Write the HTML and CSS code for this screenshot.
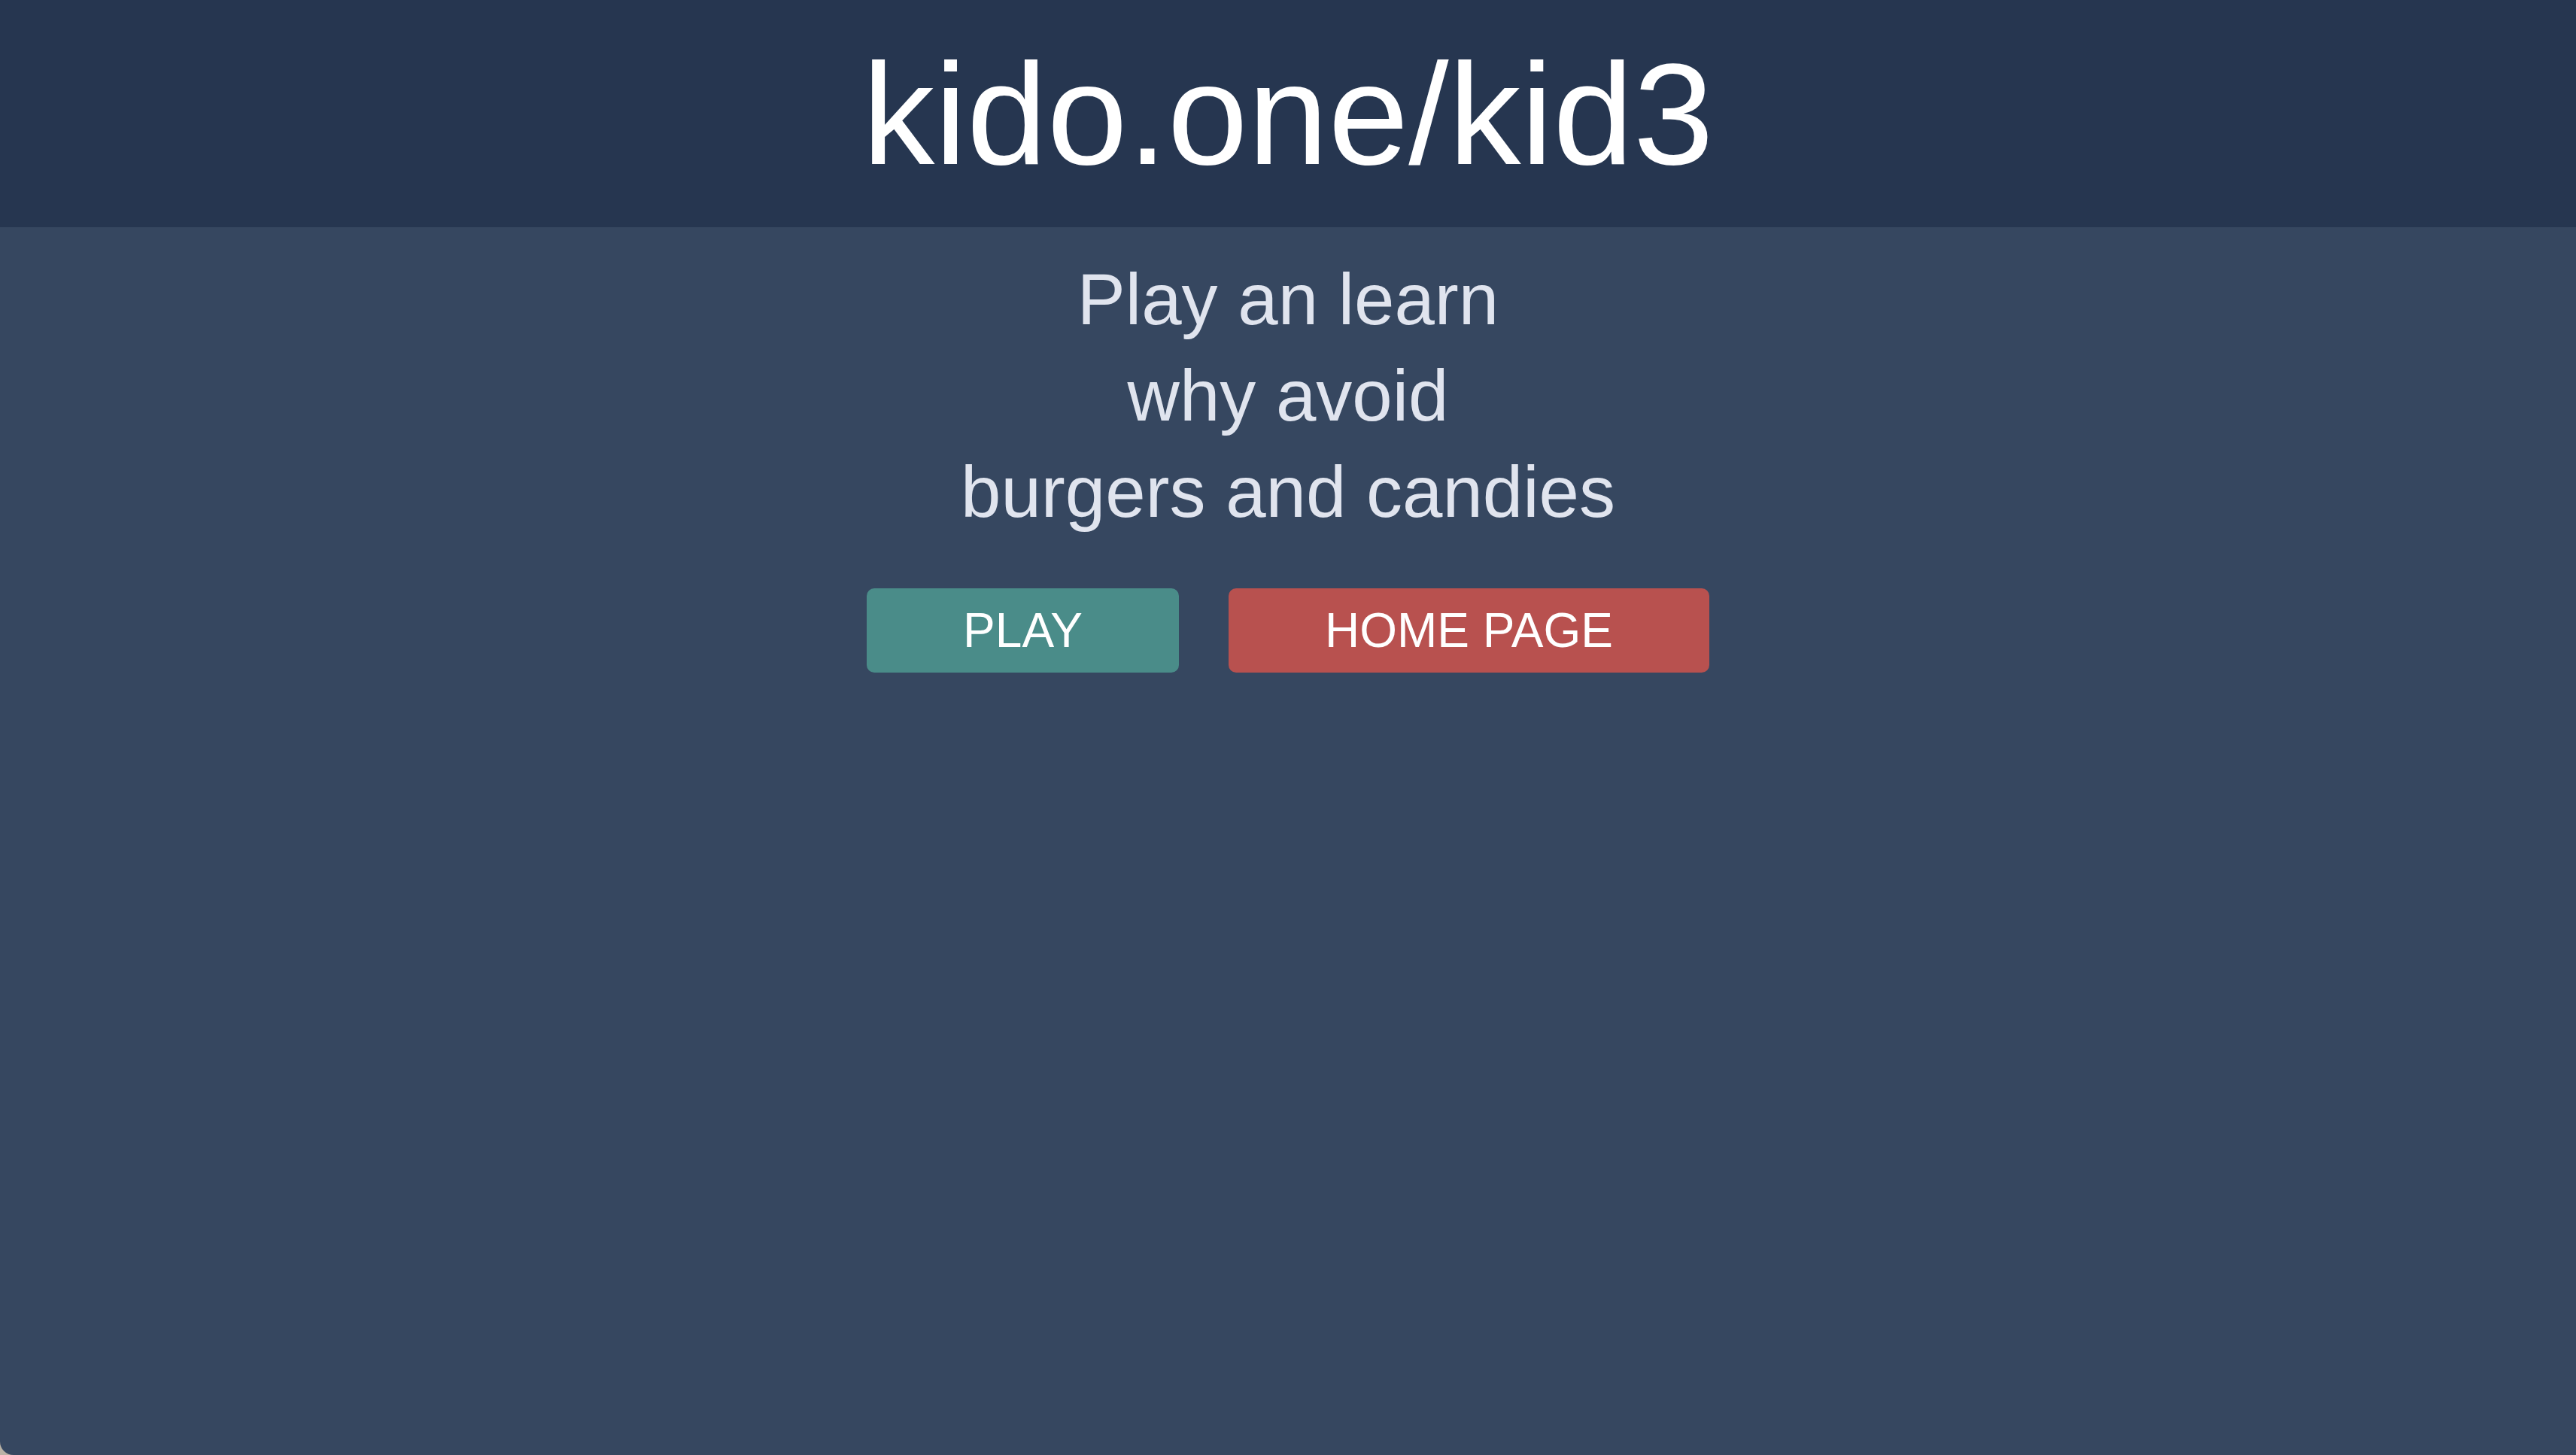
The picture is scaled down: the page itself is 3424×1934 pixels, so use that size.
FILE: index.html
```html
<!DOCTYPE html>
<html lang="en">
<head>
<meta charset="utf-8">
<title>kido.one/kid3</title>
<link rel="stylesheet" href="styles.css">
</head>
<body>
<div class="page">
  <header class="topbar">
    <h1 class="title">kido.one/kid3</h1>
  </header>
  <main class="content">
    <p class="tagline">Play an learn<br>why avoid<br>burgers and candies</p>
    <div class="actions">
      <a class="btn btn-play" href="#">PLAY</a>
      <a class="btn btn-home" href="#">HOME PAGE</a>
    </div>
  </main>
</div>
</body>
</html>
```

FILE: styles.css
```css
html, body {
  margin: 0;
  padding: 0;
  height: 100%;
  background: #b9b2a6;
}
body {
  font-family: "Liberation Sans", Arial, Helvetica, sans-serif;
}
.page {
  height: 100%;
  background: #364760;
  display: flex;
  flex-direction: column;
  border-bottom-left-radius: 18px;
  overflow: hidden;
}
.topbar {
  height: 302px;
  flex: 0 0 302px;
  background: #263650;
  display: flex;
  align-items: center;
  justify-content: center;
}
.title {
  margin: 0;
  font-size: 192px;
  font-weight: normal;
  color: #ffffff;
  line-height: normal;
}
.content {
  display: flex;
  flex-direction: column;
  align-items: center;
  padding-top: 32px;
}
.tagline {
  margin: 0;
  font-size: 96px;
  line-height: 128px;
  color: #e0e4ee;
  text-align: center;
}
.actions {
  display: flex;
  gap: 66px;
  margin-top: 64px;
}
.btn {
  display: flex;
  align-items: center;
  justify-content: center;
  height: 112px;
  padding: 0 128px;
  border-radius: 10px;
  font-size: 64px;
  color: #ffffff;
  text-decoration: none;
}
.btn-play {
  background: #4a8c89;
}
.btn-home {
  background: #b8514f;
}
```
